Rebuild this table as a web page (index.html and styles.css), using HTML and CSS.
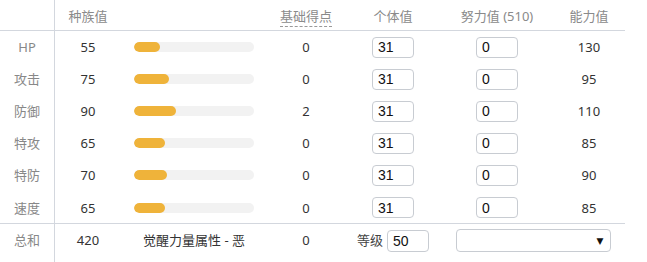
FILE: index.html
```html
<!DOCTYPE html>
<html lang="zh">
<head>
<meta charset="utf-8">
<link rel="stylesheet" href="styles.css">
</head>
<body>
<div class="stats">
  <div class="cell head lab"></div>
  <div class="cell head">种族值</div>
  <div class="cell head"></div>
  <div class="cell head"><span class="dashed">基础得点</span></div>
  <div class="cell head">个体值</div>
  <div class="cell head">努力值 (510)</div>
  <div class="cell head">能力值</div>

  <div class="cell lab">HP</div>
  <div class="cell">55</div>
  <div class="cell"><div class="bar"><div class="fill" style="width:26px"></div></div></div>
  <div class="cell">0</div>
  <div class="cell"><input class="inp" value="31"></div>
  <div class="cell"><input class="inp" value="0"></div>
  <div class="cell">130</div>

  <div class="cell lab">攻击</div>
  <div class="cell">75</div>
  <div class="cell"><div class="bar"><div class="fill" style="width:35px"></div></div></div>
  <div class="cell">0</div>
  <div class="cell"><input class="inp" value="31"></div>
  <div class="cell"><input class="inp" value="0"></div>
  <div class="cell">95</div>

  <div class="cell lab">防御</div>
  <div class="cell">90</div>
  <div class="cell"><div class="bar"><div class="fill" style="width:42px"></div></div></div>
  <div class="cell">2</div>
  <div class="cell"><input class="inp" value="31"></div>
  <div class="cell"><input class="inp" value="0"></div>
  <div class="cell">110</div>

  <div class="cell lab">特攻</div>
  <div class="cell">65</div>
  <div class="cell"><div class="bar"><div class="fill" style="width:31px"></div></div></div>
  <div class="cell">0</div>
  <div class="cell"><input class="inp" value="31"></div>
  <div class="cell"><input class="inp" value="0"></div>
  <div class="cell">85</div>

  <div class="cell lab">特防</div>
  <div class="cell">70</div>
  <div class="cell"><div class="bar"><div class="fill" style="width:33px"></div></div></div>
  <div class="cell">0</div>
  <div class="cell"><input class="inp" value="31"></div>
  <div class="cell"><input class="inp" value="0"></div>
  <div class="cell">90</div>

  <div class="cell lab last">速度</div>
  <div class="cell last">65</div>
  <div class="cell last"><div class="bar"><div class="fill" style="width:31px"></div></div></div>
  <div class="cell last">0</div>
  <div class="cell last"><input class="inp" value="31"></div>
  <div class="cell last"><input class="inp" value="0"></div>
  <div class="cell last">85</div>

  <div class="cell lab total">总和</div>
  <div class="cell total">420</div>
  <div class="cell total">觉醒力量属性 - 恶</div>
  <div class="cell total">0</div>
  <div class="cell total"><span class="lvl">等级</span><input class="inp" value="50"></div>
  <div class="cell total span2"><div class="select"><span class="arrow">▼</span></div></div>
</div>
</body>
</html>
```

FILE: styles.css
```css
html, body {
  margin: 0;
  padding: 0;
  background: #fff;
}
body {
  font-family: "Noto Sans", "Noto Sans CJK SC", sans-serif;
  font-size: 13px;
  color: #333;
}
.stats {
  display: grid;
  grid-template-columns: 55px 66px 146px 78px 96px 112px 72px;
  width: 625px;
}
.cell {
  height: 32px;
  display: flex;
  align-items: center;
  justify-content: center;
  line-height: 18px;
}
.head {
  height: 30px;
  align-items: flex-start;
  padding-top: 7px;
  box-sizing: border-box;
  color: #8a8a8a;
  border-bottom: 1px solid #d3d7de;
  height: 31px;
}
.lab {
  color: #888;
  border-right: 1px solid #d3d7de;
}
.dashed {
  border-bottom: 1px dashed #999;
  line-height: 18px;
  padding-bottom: 1px;
}
.last {
  border-bottom: 1px solid #d3d7de;
  height: 33px;
  box-sizing: border-box;
  padding-top: 1px;
}
.total {
  height: 39px;
  align-items: flex-start;
  padding-top: 7px;
  box-sizing: border-box;
}
.span2 {
  grid-column: span 2;
  padding-top: 5px;
}
.bar {
  width: 120px;
  height: 10px;
  border-radius: 5px;
  background: #f2f2f2;
  overflow: hidden;
}
.fill {
  height: 10px;
  border-radius: 5px;
  background: #efb33a;
}
.inp {
  box-sizing: border-box;
  width: 42px;
  height: 21px;
  border: 1px solid #c8ccd2;
  border-radius: 4px;
  padding: 0 5px;
  font-family: "Liberation Sans", Arial, sans-serif;
  font-size: 14px;
  color: #111;
  outline: none;
  margin-top: 0;
}
.total .inp {
  margin-top: -1px;
  height: 22px;
}
.lvl {
  color: #444;
  margin-right: 4px;
}
.select {
  box-sizing: border-box;
  width: 155px;
  height: 23px;
  border: 1px solid #c8ccd2;
  border-radius: 4px;
  display: flex;
  align-items: center;
  justify-content: flex-end;
  padding-right: 6px;
}
.arrow {
  font-size: 9px;
  color: #111;
  font-family: "DejaVu Sans", sans-serif;
}
```
